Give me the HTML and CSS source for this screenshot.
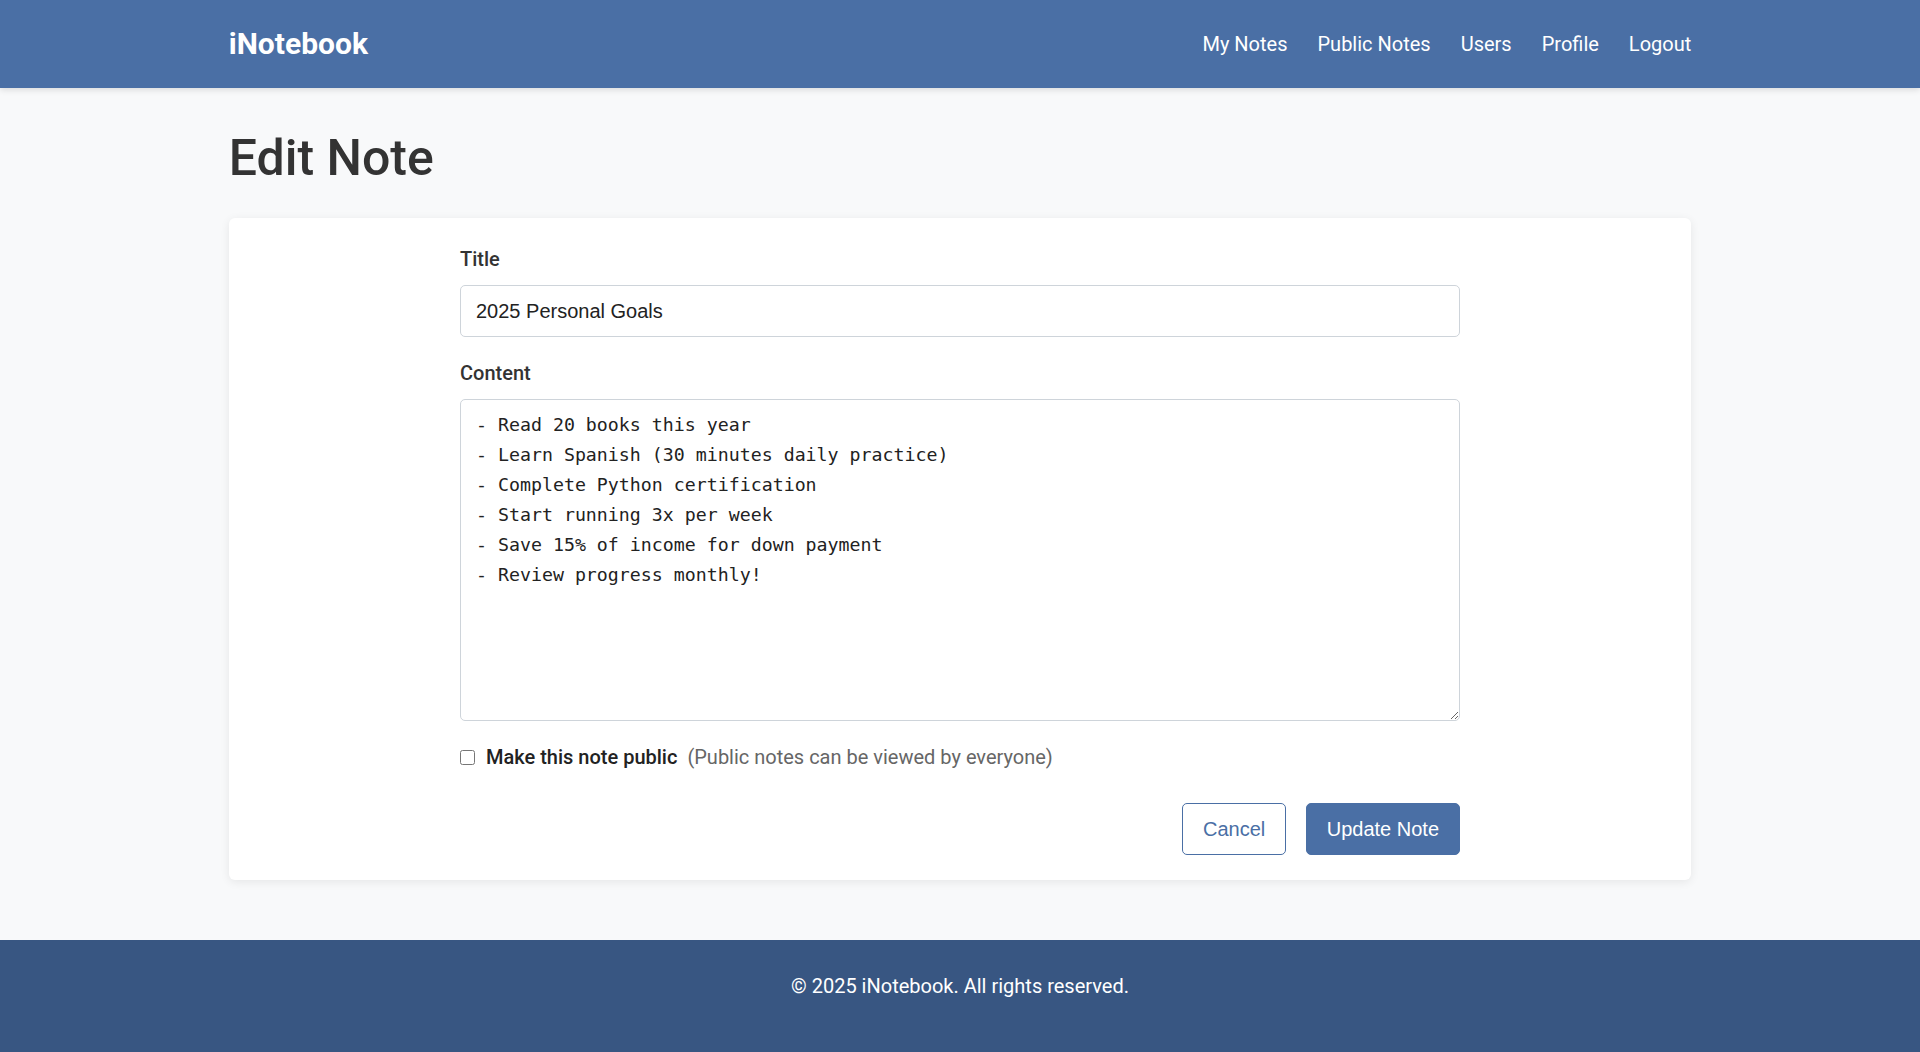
FILE: index.html
```html
<!DOCTYPE html>
<html lang="en">
<head>
<meta charset="utf-8">
<title>Edit Note - iNotebook</title>
<link rel="stylesheet" href="styles.css">
</head>
<body>
<header class="navbar">
  <div class="container nav-inner">
    <a class="brand" href="#">iNotebook</a>
    <nav class="nav-links">
      <a href="#">My Notes</a>
      <a href="#">Public Notes</a>
      <a href="#">Users</a>
      <a href="#">Profile</a>
      <a href="#">Logout</a>
    </nav>
  </div>
</header>
<main class="main">
  <div class="container">
    <h1 class="page-title">Edit Note</h1>
    <div class="card">
      <form class="note-form">
        <div class="form-group">
          <label class="form-label" for="title">Title</label>
          <input class="form-control" id="title" type="text" value="2025 Personal Goals">
        </div>
        <div class="form-group">
          <label class="form-label" for="content">Content</label>
          <textarea class="form-control textarea" id="content" rows="10">- Read 20 books this year
- Learn Spanish (30 minutes daily practice)
- Complete Python certification
- Start running 3x per week
- Save 15% of income for down payment
- Review progress monthly!</textarea>
        </div>
        <div class="check-row">
          <input class="checkbox" type="checkbox" id="public">
          <label class="check-label" for="public">Make this note public</label>
          <span class="hint">(Public notes can be viewed by everyone)</span>
        </div>
        <div class="actions">
          <a class="btn btn-outline" href="#">Cancel</a>
          <button class="btn btn-primary" type="button">Update Note</button>
        </div>
      </form>
    </div>
  </div>
</main>
<footer class="footer">
  <p class="footer-text">© 2025 iNotebook. All rights reserved.</p>
</footer>
</body>
</html>
```

FILE: styles.css
```css
* { box-sizing: border-box; }

html, body {
  margin: 0;
  padding: 0;
}

body {
  font-family: Roboto, "Liberation Sans", Arial, sans-serif;
  font-size: 20px;
  line-height: 1.5;
  color: #333;
  background: #f8f9fa;
  min-height: 100vh;
  display: flex;
  flex-direction: column;
}

.container {
  max-width: 1500px;
  margin: 0 auto;
  padding: 0 18.75px;
  width: 100%;
}

.navbar {
  background: #4a6fa5;
  height: 88px;
  display: flex;
  align-items: center;
  box-shadow: 0 2px 6px rgba(0, 0, 0, 0.12);
  position: relative;
  z-index: 1;
}

.nav-inner {
  display: flex;
  align-items: center;
  justify-content: space-between;
}

.brand {
  color: #fff;
  text-decoration: none;
  font-weight: 700;
  font-size: 30px;
  line-height: 1.2;
}

.nav-links {
  display: flex;
  gap: 30px;
}

.nav-links a {
  color: #fff;
  text-decoration: none;
  font-size: 20px;
}

.main {
  flex: 1;
  padding: 40px 0 60px;
}

.page-title {
  margin: 0 0 30px;
  font-size: 50px;
  font-weight: 500;
  line-height: 1.2;
  color: #333;
}

.card {
  background: #fff;
  border-radius: 6px;
  box-shadow: 0 2px 10px rgba(0, 0, 0, 0.08);
  padding: 25px;
}

.note-form {
  max-width: 1000px;
  margin: 0 auto;
}

.form-group {
  margin-bottom: 20px;
}

.form-label {
  display: block;
  font-weight: 500;
  padding-top: 1px;
  margin-bottom: 11px;
  color: #333;
}

.form-control {
  display: block;
  width: 100%;
  font-family: "Liberation Sans", Arial, sans-serif;
  font-size: 20px;
  line-height: 30px;
  color: #222;
  padding: 10px 15px;
  border: 1px solid #ced4da;
  border-radius: 5px;
  background: #fff;
  margin: 0;
}

.textarea {
  font-family: "DejaVu Sans Mono", monospace;
  font-size: 18.25px;
  line-height: 30px;
  height: 322px;
  resize: vertical;
}

.check-row {
  display: flex;
  align-items: center;
  margin-top: 21px;
}

.checkbox {
  width: 15px;
  height: 15px;
  margin: 0 11px 0 0;
}

.check-label {
  font-weight: 500;
  color: #222;
}

.hint {
  color: #666;
  margin-left: 10px;
}

.actions {
  display: flex;
  justify-content: flex-end;
  gap: 20px;
  margin-top: 31px;
}

.btn {
  display: inline-block;
  font-family: "Liberation Sans", Arial, sans-serif;
  font-size: 20px;
  line-height: 30px;
  padding: 10px 20px;
  border-radius: 5px;
  border: 1px solid #4a6fa5;
  text-decoration: none;
  cursor: pointer;
}

.btn-outline {
  background: #fff;
  color: #4a6fa5;
  padding: 10px 19.5px;
}

.btn-primary {
  background: #4a6fa5;
  color: #fff;
}

.footer {
  background: #385682;
  color: #fff;
  text-align: center;
  padding: 31px 0 51px;
}

.footer-text {
  margin: 0;
  font-size: 20px;
  line-height: 30px;
}
```
